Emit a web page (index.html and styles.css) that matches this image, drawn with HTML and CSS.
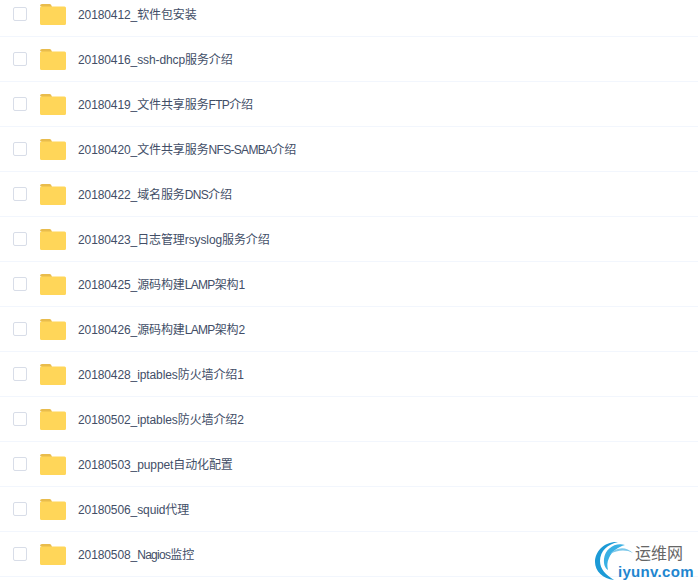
FILE: index.html
```html
<!DOCTYPE html>
<html lang="en">
<head>
<meta charset="UTF-8" />
<title>Files</title>
<link rel="stylesheet" href="styles.css">
</head>
<body>
<svg class="sprite" width="0" height="0">
  <symbol id="folder" viewBox="0 0 26 21">
    <path d="M0 2a2 2 0 0 1 2-2h7.500a2 2 0 0 1 1.600.8L12 3H2z" fill="#e9bc4c"/>
    <path d="M0 4a1.500 1.500 0 0 1 1.500-1.500h23A1.500 1.500 0 0 1 26 4v15.500a1.500 1.500 0 0 1-1.500 1.500h-23A1.500 1.500 0 0 1 0 19.500z" fill="#ffd659"/>
  </symbol>
</svg>
<ul class="file-list">
  <li class="file-row"><span class="check"></span><svg class="folder"><use href="#folder"/></svg><span class="name">20180412_软件包安装</span></li>
  <li class="file-row"><span class="check"></span><svg class="folder"><use href="#folder"/></svg><span class="name">20180416_ssh-dhcp服务介绍</span></li>
  <li class="file-row"><span class="check"></span><svg class="folder"><use href="#folder"/></svg><span class="name">20180419_文件共享服务<span class="tight">FTP</span>介绍</span></li>
  <li class="file-row"><span class="check"></span><svg class="folder"><use href="#folder"/></svg><span class="name">20180420_文件共享服务<span class="tight">NFS-SAMBA</span>介绍</span></li>
  <li class="file-row"><span class="check"></span><svg class="folder"><use href="#folder"/></svg><span class="name">20180422_域名服务<span class="tight">DNS</span>介绍</span></li>
  <li class="file-row"><span class="check"></span><svg class="folder"><use href="#folder"/></svg><span class="name">20180423_日志管理rsyslog服务介绍</span></li>
  <li class="file-row"><span class="check"></span><svg class="folder"><use href="#folder"/></svg><span class="name">20180425_源码构建<span class="tight">LAMP</span>架构1</span></li>
  <li class="file-row"><span class="check"></span><svg class="folder"><use href="#folder"/></svg><span class="name">20180426_源码构建<span class="tight">LAMP</span>架构2</span></li>
  <li class="file-row"><span class="check"></span><svg class="folder"><use href="#folder"/></svg><span class="name">20180428_iptables防火墙介绍1</span></li>
  <li class="file-row"><span class="check"></span><svg class="folder"><use href="#folder"/></svg><span class="name">20180502_iptables防火墙介绍2</span></li>
  <li class="file-row"><span class="check"></span><svg class="folder"><use href="#folder"/></svg><span class="name">20180503_puppet自动化配置</span></li>
  <li class="file-row"><span class="check"></span><svg class="folder"><use href="#folder"/></svg><span class="name">20180506_squid代理</span></li>
  <li class="file-row"><span class="check"></span><svg class="folder"><use href="#folder"/></svg><span class="name">20180508_<span class="tight">Nagios</span>监控</span></li>
</ul>
<div class="watermark">
  <svg class="arcs" width="46" height="46" viewBox="0 0 46 46" fill="none">
    <path d="M24 2C11 1 1 11 1 22c0 9 8 17 19 18C12 35 6 29 6 21C6 11 14 4 24 2z" fill="#1c9ad6"/>
    <path d="M31 5C21 2 11 9 10 19c-.500 5 1 9 4 11-1-4-1-8 1-12C18 11 24 7 31 5z" fill="#39b0e4"/>
    <path d="M39 13C32 6 22 7 16 14C23 10 32 9 39 13z" fill="#7cc8ea"/>
  </svg>
  <span class="wm-title">运维网</span>
  <span class="wm-url">iyunv.com</span>
</div>
</body>
</html>
```

FILE: styles.css
```css
html, body {
  height: 588px;
  overflow: hidden;
}
body {
  margin: 0;
  background: #fff;
  font-family: "Liberation Sans", "Noto Sans CJK SC", sans-serif;
  position: relative;
}
.sprite {
  display: block;
  height: 0;
}
.file-list {
  list-style: none;
  margin: -8px 0 0;
  padding: 0;
}
.file-row {
  display: flex;
  align-items: center;
  height: 44px;
  border-bottom: 1px solid #f2f6fd;
  padding-left: 13px;
}
.check {
  box-sizing: border-box;
  width: 14px;
  height: 14px;
  border: 1px solid #d8dde8;
  border-radius: 2px;
  background: #fff;
}
.folder {
  width: 26px;
  height: 21px;
  margin-left: 13px;
}
.name {
  margin-left: 12px;
  padding-bottom: 1px;
  font-size: 12px;
  letter-spacing: -0.1px;
  color: #424e67;
}
.tight {
  letter-spacing: -0.7px;
}
.watermark {
  position: absolute;
  left: 594px;
  top: 540px;
  width: 104px;
  height: 42px;
}
.arcs {
  position: absolute;
  left: 0;
  top: 0;
}
.wm-title {
  position: absolute;
  left: 41px;
  top: 5px;
  font-size: 16px;
  line-height: 18px;
  color: #666;
}
.wm-url {
  position: absolute;
  left: 24px;
  top: 23px;
  font-size: 15px;
  line-height: 17px;
  font-weight: bold;
  letter-spacing: 0.3px;
  color: #1f86cf;
}
```
